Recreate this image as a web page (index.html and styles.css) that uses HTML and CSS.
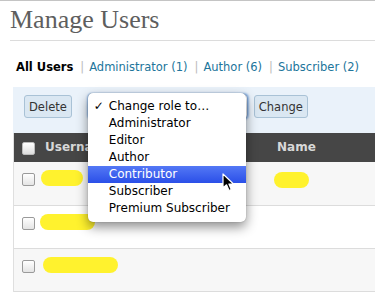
FILE: index.html
```html
<!DOCTYPE html>
<html lang="en">
<head>
    <meta charset="UTF-8">
    <meta name="viewport" content="width=device-width, initial-scale=1.0">
    <title>Manage Users</title>
    <link rel="stylesheet" href="styles.css">
</head>
<body>

    <div class="page">
        <h1>Manage Users</h1>

        <ul class="tabs">
            <li class="current">All Users</li>
            <li><span class="sep">|</span><a href="#">Administrator (1)</a></li>
            <li><span class="sep">|</span><a href="#">Author (6)</a></li>
            <li><span class="sep">|</span><a href="#">Subscriber (2)</a></li>
        </ul>

        <div class="toolbar">
            <button class="btn">Delete</button>
            <div class="role-select">
                <div class="select-box"></div>
                <ul class="menu">
                    <li><span class="check">✓</span>Change role to…</li>
                    <li>Administrator</li>
                    <li>Editor</li>
                    <li>Author</li>
                    <li class="active">Contributor</li>
                    <li>Subscriber</li>
                    <li>Premium Subscriber</li>
                </ul>
                <svg class="cursor" width="13" height="19" viewBox="0 0 13 19">
                    <path d="M1 1 L1 15 L4.5 11.8 L7 17.5 L9.3 16.5 L6.9 11 L11.5 11 Z" fill="#000" stroke="#fff" stroke-width="1.2" stroke-linejoin="round"/>
                </svg>
            </div>
            <button class="btn">Change</button>
        </div>

        <div class="users">
            <div class="head">
                <span class="cb cb-head"></span>
                <div class="col-user">Username</div>
                <div class="col-name">Name</div>
            </div>
            <div class="row alt">
                <span class="cb"></span>
                <div class="col-user"><span class="blob b1"></span></div>
                <div class="col-name"><span class="blob b4"></span></div>
            </div>
            <div class="row">
                <span class="cb"></span>
                <div class="col-user"><span class="blob b2"></span></div>
                <div class="col-name"></div>
            </div>
            <div class="row alt">
                <span class="cb"></span>
                <div class="col-user"><span class="blob b3"></span></div>
                <div class="col-name"></div>
            </div>
        </div>
    </div>

</body>
</html>
```
FILE: styles.css
```css
body {
    margin: 0;
    border-top: 1px solid #c4c4c4;
    font-family: "DejaVu Sans", sans-serif;
    font-size: 11.5px;
    color: #333;
    overflow: hidden;
}
.page {
    padding-left: 10px;
}
h1 {
    margin: 0;
    height: 39px;
    line-height: 37px;
    font-family: "Liberation Serif", serif;
    font-size: 26px;
    font-weight: normal;
    color: #5e5e5e;
    border-bottom: 1px solid #dcdcdc;
}
.tabs {
    list-style: none;
    margin: 0 0 0 6px;
    padding: 16px 0 10px;
    line-height: 20px;
    display: flex;
    white-space: nowrap;
}
.tabs .current {
    font-weight: bold;
    color: #000;
}
.tabs .sep {
    color: #bbb;
    margin: 0 5px 0 7px;
}
.tabs a {
    color: #21759b;
    text-decoration: none;
}
.toolbar {
    margin-left: 3px;
    height: 46px;
    background: #eaf2fa;
    display: flex;
    align-items: flex-start;
    padding: 8px 0 0 11px;
    box-sizing: border-box;
}
.btn {
    height: 23px;
    padding: 0 4px;
    font-family: "DejaVu Sans", sans-serif;
    font-size: 11.5px;
    color: #333;
    background: #dae7f2;
    border: 1px solid #a9c2d6;
    border-radius: 3px;
}
.role-select {
    position: relative;
    width: 160px;
    height: 23px;
    margin: 0 6px 0 16px;
}
.select-box {
    height: 25px;
    margin-top: -1px;
    border: 1px solid #7fa4d4;
    border-radius: 4px;
    background: #fff;
    box-shadow: 0 0 2px 1px #8fb6e6;
    box-sizing: border-box;
}
.menu {
    position: absolute;
    left: 0;
    top: -2px;
    width: 158px;
    margin: 0;
    padding: 5px 0 5px;
    list-style: none;
    background: #fff;
    border-radius: 5px;
    box-shadow: 0 5px 12px rgba(0, 0, 0, 0.45), 0 0 1px rgba(0, 0, 0, 0.4);
    font-size: 12px;
    color: #000;
    z-index: 2;
}
.menu li {
    height: 17px;
    line-height: 17px;
    padding-left: 21px;
    position: relative;
    white-space: nowrap;
}
.menu .check {
    position: absolute;
    left: 6px;
    font-weight: bold;
}
.menu .active {
    color: #fff;
    background: linear-gradient(#5478f5, #2a4fe8);
}
.cursor {
    position: absolute;
    left: 134px;
    top: 78px;
    z-index: 3;
}
.users {
    margin-left: 3px;
    border-left: 1px solid #dfdfdf;
}
.head,
.row {
    display: flex;
    align-items: flex-start;
}
.head {
    height: 29px;
    background: #464646;
    color: #d8d8d8;
    font-weight: bold;
    font-size: 12px;
    line-height: 29px;
}
.row {
    height: 43px;
    padding-top: 8px;
    box-sizing: border-box;
    border-bottom: 1px solid #dcdcdc;
    background: #fff;
}
.head + .row {
    height: 44px;
}
.row.alt {
    background: #f7f7f7;
}
.cb {
    flex: none;
    width: 11px;
    height: 11px;
    margin: 3px 0 0 8px;
    border: 1px solid #9a9a9a;
    border-radius: 2px;
    background: linear-gradient(#fff, #e4e4e4);
}
.cb-head {
    margin-top: 9px;
    border-color: #bbb;
    background: linear-gradient(#fff, #dcdcdc);
}
.col-user {
    width: 236px;
    flex: none;
}
.head .col-user {
    padding-left: 10px;
    box-sizing: border-box;
}
.head .col-name {
    padding-left: 6px;
}
.blob {
    display: block;
    height: 16px;
    border-radius: 8px;
    background: #fff22e;
}
.b1 {
    width: 42px;
    margin-left: 6px;
}
.b2 {
    width: 55px;
    margin-left: 5px;
}
.b3 {
    width: 75px;
    margin-left: 8px;
}
.b4 {
    width: 35px;
    margin: 2px 0 0 3px;
}
```
